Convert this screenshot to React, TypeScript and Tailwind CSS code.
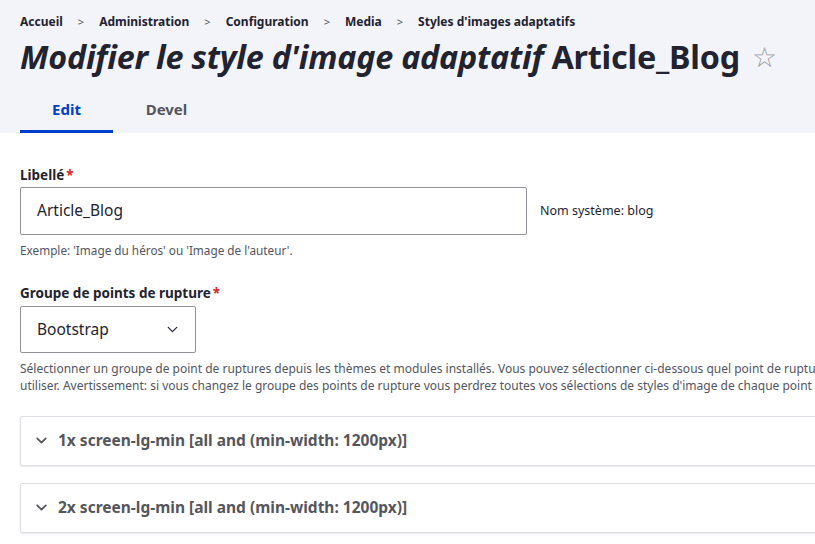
import { ChevronDown } from 'lucide-react'

const crumbs = ['Accueil', 'Administration', 'Configuration', 'Media', "Styles d'images adaptatifs"]

function Breadcrumb() {
  return (
    <nav className="flex items-center text-[12px] font-bold text-[#222330]">
      {crumbs.map((c, i) => (
        <span key={c} className="flex items-center">
          {i > 0 && <span className="px-[15px] text-[11px] font-normal text-[#545560]">&gt;</span>}
          <span>{c}</span>
        </span>
      ))}
    </nav>
  )
}

function Accordion({ label }: { label: string }) {
  return (
    <div className="w-[1000px] rounded-[2px] border border-[#dedfe4] bg-white shadow-[0_1px_2px_rgba(34,35,48,0.1)]">
      <div className="flex h-[48px] items-center gap-[8px] pl-[12px] text-[15.5px] font-bold text-[#55565b]">
        <ChevronDown size={17} strokeWidth={2.5} />
        <span>{label}</span>
      </div>
    </div>
  )
}

export default function App() {
  return (
    <div className="h-[544px] w-[815px] overflow-hidden bg-white font-['Noto_Sans',sans-serif] text-[#222330]">
      <header className="bg-[#f3f4f9] px-[20px] pt-[13px]">
        <Breadcrumb />
        <h1 className="mt-[7px] flex items-center text-[32.3px] font-bold leading-[36px] tracking-[-0.2px]">
          <em>Modifier le style d'image adaptatif</em>
          <span className="ml-[8px]">Article_Blog</span>
          <span className="ml-[12px] text-[28px] font-normal text-[#9a9a9f]">☆</span>
        </h1>
        <div className="mt-[14px] flex text-[15px] font-bold">
          <div className="flex h-[45px] w-[93px] items-center justify-center border-b-[3px] border-[#003ecc] text-[#003ecc]">
            Edit
          </div>
          <div className="flex h-[45px] w-[107px] items-center justify-center pb-[3px] text-[#545560]">Devel</div>
        </div>
      </header>

      <main className="px-[20px] pt-[33px]">
        <label className="block text-[13.5px] font-bold leading-[18px]">
          Libellé<span className="ml-[2px] text-[#dc2323]">*</span>
        </label>
        <div className="mt-[3px] flex items-center">
          <div className="flex h-[48px] w-[507px] items-center rounded-[2px] border border-[#919297] px-[16px] text-[15.5px]">
            Article_Blog
          </div>
          <span className="ml-[13px] text-[12.5px] text-[#222330]">Nom système: blog</span>
        </div>
        <p className="mt-[7px] text-[11.75px] text-[#545560]">Exemple: 'Image du héros' ou 'Image de l'auteur'.</p>

        <label className="mt-[24px] block text-[13.5px] font-bold leading-[18px]">
          Groupe de points de rupture<span className="ml-[2px] text-[#dc2323]">*</span>
        </label>
        <div className="mt-[4px] flex h-[47px] w-[176px] items-center justify-between rounded-[2px] border border-[#919297] pl-[16px] pr-[14px] text-[15.5px]">
          <span>Bootstrap</span>
          <ChevronDown size={17} strokeWidth={1.75} className="text-[#222330]" />
        </div>
        <div className="mt-[7px] whitespace-nowrap text-[12px] leading-[17px] text-[#545560]">
          <p>
            Sélectionner un groupe de point de ruptures depuis les thèmes et modules installés. Vous pouvez sélectionner
            ci-dessous quel point de rupture et multiplicateur vous souhaitez
          </p>
          <p>
            utiliser. Avertissement: si vous changez le groupe des points de rupture vous perdrez toutes vos sélections de
            styles d'image de chaque point de rupture.
          </p>
        </div>

        <div className="mt-[22px] flex flex-col gap-[17px]">
          <Accordion label="1x screen-lg-min [all and (min-width: 1200px)]" />
          <Accordion label="2x screen-lg-min [all and (min-width: 1200px)]" />
        </div>
      </main>
    </div>
  )
}
